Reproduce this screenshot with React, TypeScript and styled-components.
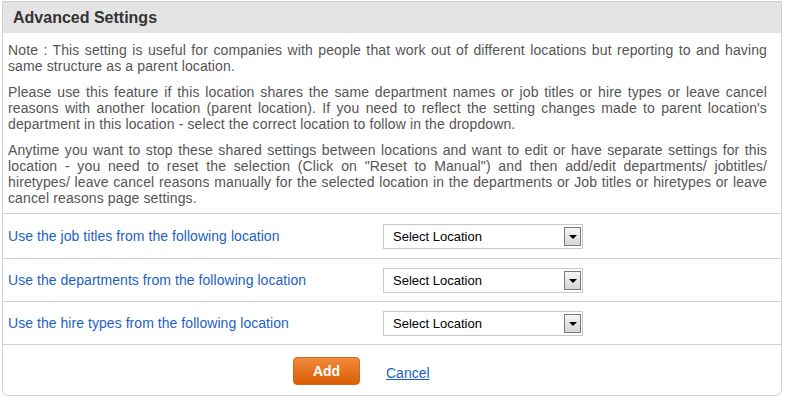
import React from "react";
import styled, { createGlobalStyle } from "styled-components";

const Global = createGlobalStyle`
  html, body { margin: 0; padding: 0; background: #fff; }
  body { font-family: "Liberation Sans", Arial, sans-serif; }
`;

const Panel = styled.div`
  margin: 1px 2px 0 2px;
  width: 780px;
  height: 395px;
  border: 1px solid #cfcfcf;
  border-radius: 0 0 6px 6px;
  box-sizing: border-box;
  display: flex;
  flex-direction: column;
`;

const Header = styled.div`
  height: 31px;
  background: #e4e4e4;
  display: flex;
  align-items: center;
  padding-left: 10px;
  font-size: 16px;
  font-weight: bold;
  color: #333;
`;

const Notes = styled.div`
  padding: 9px 14px 7px 5px;
`;

const Para = styled.p`
  margin: 0 0 10px 0;
  font-size: 14px;
  line-height: 16px;
  letter-spacing: 0.12px;
  color: #555;
  text-align: justify;
  &:last-child { margin-bottom: 0; }
`;

const Row = styled.div<{ $h: number }>`
  height: ${(p) => p.$h}px;
  border-top: 1px solid #d0d0d0;
  box-sizing: border-box;
  display: grid;
  grid-template-columns: 375px 200px;
  align-items: center;
  padding-left: 5px;
`;

const Label = styled.span`
  font-size: 14px;
  letter-spacing: 0.05px;
  color: #1e5fc4;
`;

const FakeSelect = styled.div`
  height: 25px;
  border: 1px solid #c8c8c8;
  box-sizing: border-box;
  display: flex;
  align-items: center;
  justify-content: space-between;
  padding: 0 1px 0 9px;
  font-size: 13px;
  color: #000;
`;

const ArrowBox = styled.div`
  width: 17px;
  height: 19px;
  box-sizing: border-box;
  border: 1px solid #7a7a7a;
  background: linear-gradient(#f6f6f6, #d6d6d6);
  display: flex;
  align-items: center;
  justify-content: center;
`;

const Triangle = styled.div`
  width: 0;
  height: 0;
  border-left: 4px solid transparent;
  border-right: 4px solid transparent;
  border-top: 4px solid #000;
  margin-top: 2px;
`;

const Footer = styled.div`
  flex: 1;
  border-top: 1px solid #d0d0d0;
  display: flex;
  align-items: flex-start;
  padding: 12px 0 0 290px;
  gap: 26px;
`;

const AddButton = styled.button`
  width: 67px;
  height: 28px;
  border: 1px solid #d2661f;
  border-radius: 4px;
  background: linear-gradient(#f08a3c, #dc5d05);
  color: #fff;
  font-family: "Liberation Sans", Arial, sans-serif;
  font-weight: bold;
  font-size: 14px;
  padding: 0;
`;

const CancelLink = styled.a`
  font-size: 14px;
  color: #1e5fc4;
  text-decoration: underline;
  margin-top: 8px;
`;

const rows = [
  { label: "Use the job titles from the following location", h: 45 },
  { label: "Use the departments from the following location", h: 43 },
  { label: "Use the hire types from the following location", h: 43 },
];

export default function App() {
  return (
    <>
      <Global />
      <Panel>
        <Header>Advanced Settings</Header>
        <Notes>
          <Para>
            Note : This setting is useful for companies with people that work out of different locations but reporting to and having same structure as a parent location.
          </Para>
          <Para>
            Please use this feature if this location shares the same department names or job titles or hire types or leave cancel reasons with another location (parent location). If you need to reflect the setting changes made to parent location's department in this location - select the correct location to follow in the dropdown.
          </Para>
          <Para>
            Anytime you want to stop these shared settings between locations and want to edit or have separate settings for this location - you need to reset the selection (Click on "Reset to Manual") and then add/edit departments/ jobtitles/ hiretypes/ leave cancel reasons manually for the selected location in the departments or Job titles or hiretypes or leave cancel reasons page settings.
          </Para>
        </Notes>
        {rows.map((r) => (
          <Row key={r.label} $h={r.h}>
            <Label>{r.label}</Label>
            <FakeSelect>
              <span>Select Location</span>
              <ArrowBox>
                <Triangle />
              </ArrowBox>
            </FakeSelect>
          </Row>
        ))}
        <Footer>
          <AddButton>Add</AddButton>
          <CancelLink href="#">Cancel</CancelLink>
        </Footer>
      </Panel>
    </>
  );
}
